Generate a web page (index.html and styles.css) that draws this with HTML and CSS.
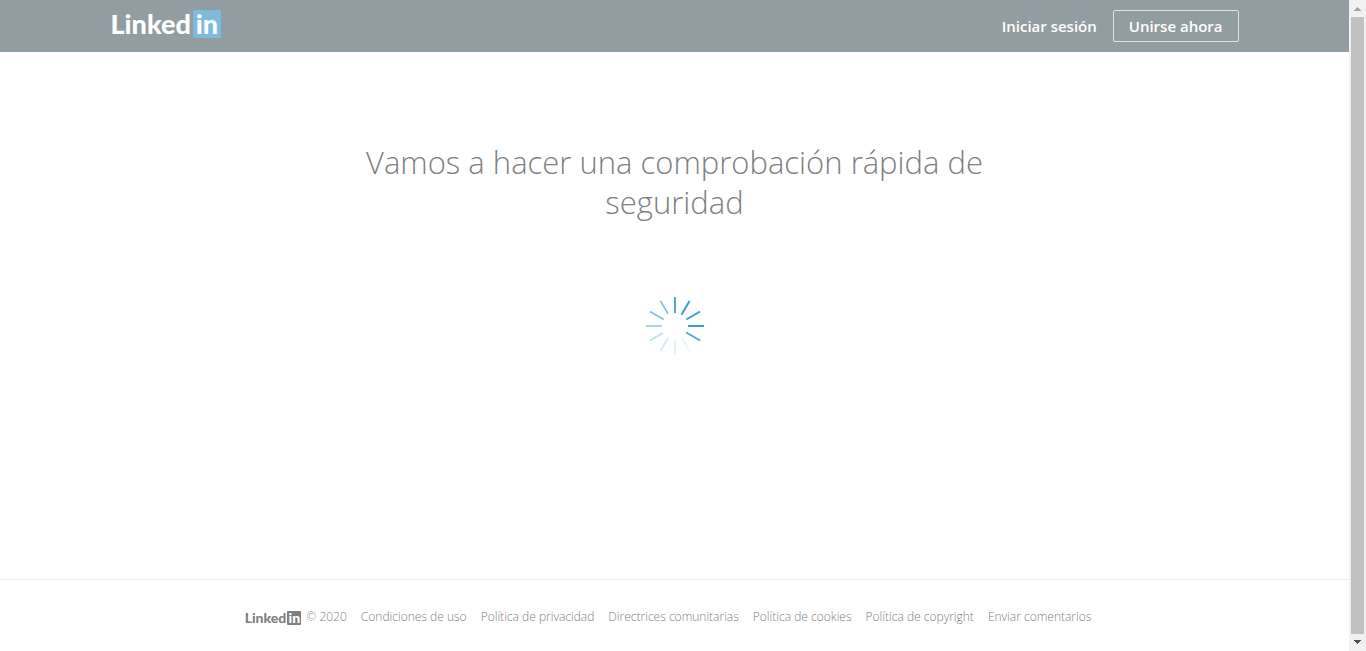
FILE: index.html
```html
<!DOCTYPE html>
<html lang="es">
<head>
<meta charset="utf-8">
<title>Comprobación de seguridad | LinkedIn</title>
<meta name="viewport" content="width=device-width, initial-scale=1">
<link rel="stylesheet" href="styles.css">
</head>
<body>
<div class="page">
  <header class="site-header">
    <div class="header-inner">
      <a class="logo" href="#"><span class="logo-word">Linked</span><span class="logo-box">in</span></a>
      <nav class="header-nav">
        <a class="nav-link" href="#">Iniciar sesión</a>
        <a class="nav-join" href="#">Unirse ahora</a>
      </nav>
    </div>
  </header>
  <main class="content">
    <h1 class="title">Vamos a hacer una comprobación rápida de seguridad</h1>
    <svg class="spinner" viewBox="-30 -30 60 60" aria-hidden="true">
      <g stroke="#3a9fcd" stroke-width="2">
        <path d="M13 0H29"/>
        <path d="M13 0H29" transform="rotate(30)" opacity=".9"/>
        <path d="M14 0H29" transform="rotate(60)" opacity=".08"/>
        <path d="M14 0H29" transform="rotate(90)" opacity=".13"/>
        <path d="M14 0H29" transform="rotate(120)" opacity=".2"/>
        <path d="M14 0H29" transform="rotate(150)" opacity=".32"/>
        <path d="M13 0H29" transform="rotate(180)" opacity=".45"/>
        <path d="M13 0H29" transform="rotate(210)" opacity=".62"/>
        <path d="M14 0H29" transform="rotate(240)" opacity=".75" stroke-width="1.3"/>
        <path d="M13 0H29" transform="rotate(270)" opacity=".88"/>
        <path d="M13 0H29" transform="rotate(300)"/>
        <path d="M13 0H29" transform="rotate(330)"/>
      </g>
    </svg>
  </main>
  <footer class="site-footer">
    <ul class="footer-list">
      <li class="copyright"><span class="mini-logo"><span>Linked</span><span class="mini-box">in</span></span><span>© 2020</span></li>
      <li><a href="#">Condiciones de uso</a></li>
      <li><a href="#">Política de privacidad</a></li>
      <li><a href="#">Directrices comunitarias</a></li>
      <li><a href="#">Política de cookies</a></li>
      <li><a href="#">Política de copyright</a></li>
      <li><a href="#">Enviar comentarios</a></li>
    </ul>
  </footer>
</div>
<div class="scrollbar" aria-hidden="true">
  <svg class="arrow" viewBox="0 0 17 17"><path d="M5 11h7v-1h-1v-1h-1v-1h-1v-1h-1v1h-1v1h-1v1h-1z" fill="#a3a3a3"/></svg>
  <div class="thumb"></div>
  <svg class="arrow" viewBox="0 0 17 17"><path d="M5 6h7v1h-1v1h-1v1h-1v1h-1v-1h-1v-1h-1v-1h-1z" fill="#505050"/></svg>
</div>
</body>
</html>
```
FILE: styles.css
```css
* {
  box-sizing: border-box;
}

body {
  margin: 0;
  display: flex;
  height: 100vh;
  background: #fff;
  color: #808080;
  font-family: "Segoe UI", "Open Sans", "Noto Sans", sans-serif;
}

a {
  color: inherit;
  text-decoration: none;
}

.page {
  flex: 1;
  min-width: 0;
  display: flex;
  flex-direction: column;
}

.site-header {
  background: #929da2;
  color: #fff;
  padding: 0 16px;
}

.header-inner {
  max-width: 1128px;
  height: 52px;
  margin: 0 auto;
  display: flex;
  align-items: center;
  justify-content: space-between;
}

.logo {
  display: flex;
  align-items: center;
  gap: 2px;
  margin-bottom: 4px;
  font: 900 27px/28px Lato, sans-serif;
}

.logo-box {
  width: 28px;
  height: 28px;
  border-radius: 1px;
  background: #7cbbdd;
  text-align: center;
}

.header-nav {
  display: flex;
  align-items: center;
  gap: 16px;
  font-size: 15px;
  font-weight: 600;
  line-height: 30px;
}

.nav-join {
  padding: 0 15px;
  border: 1px solid #dfe2e4;
  border-radius: 2px;
}

.content {
  flex: 1;
  display: flex;
  flex-direction: column;
  align-items: center;
  padding: 90px 16px 0;
}

.title {
  max-width: 660px;
  margin: 0;
  font-size: 31px;
  font-weight: 340;
  line-height: 40px;
  text-align: center;
}

.spinner {
  width: 60px;
  height: 60px;
  margin-top: 74px;
}

.site-footer {
  border-top: 1px solid #ebebeb;
  padding: 27px 13px 25px 0;
}

.footer-list {
  display: flex;
  flex-wrap: wrap;
  justify-content: center;
  gap: 0 14px;
  margin: 0;
  padding: 0;
  list-style: none;
  font-size: 12px;
  font-weight: 320;
  line-height: 19px;
}

.copyright {
  display: flex;
  gap: 5px;
}

.mini-logo {
  display: flex;
  align-items: center;
  gap: 1px;
  padding-top: 2px;
  color: #808080;
  font: 900 14px/14px Lato, sans-serif;
}

.mini-box {
  width: 14px;
  border-radius: 1px;
  background: #808080;
  color: #fff;
  text-align: center;
}

.scrollbar {
  width: 17px;
  display: flex;
  flex-direction: column;
  background: #f1f1f1;
}

.arrow {
  width: 17px;
  height: 17px;
}

.thumb {
  flex: 1;
  margin: 0 2px;
  background: #c1c1c1;
}
```
